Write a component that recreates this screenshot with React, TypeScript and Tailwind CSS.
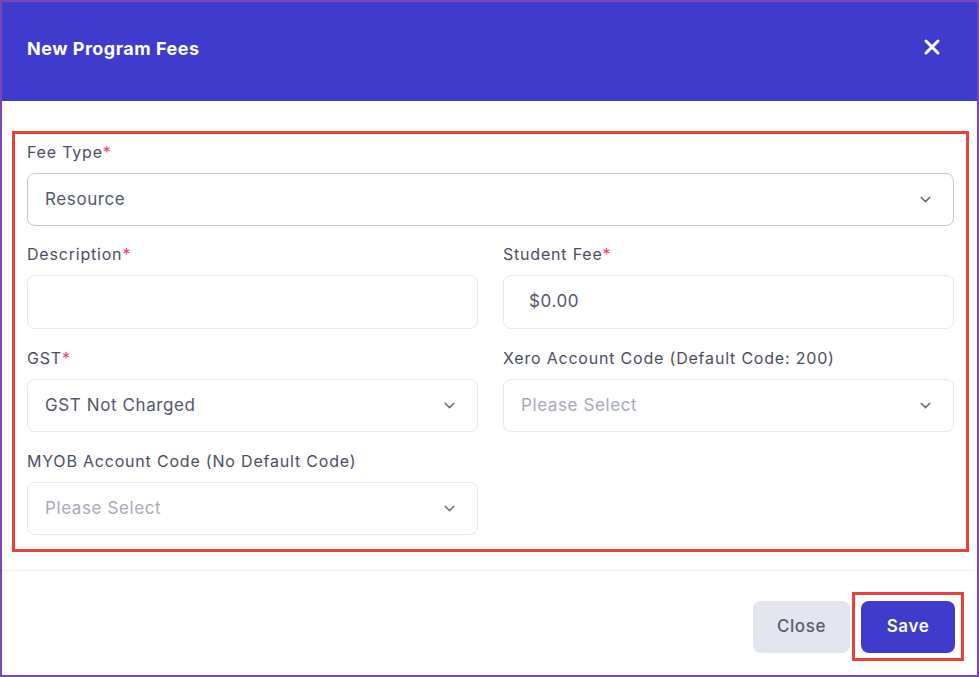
import { ChevronDown, X } from 'lucide-react'

const font = { fontFamily: 'Inter, "Open Sans", sans-serif' }

function Label({ text, required }: { text: string; required?: boolean }) {
  return (
    <label className="block h-[22px] text-[16px] leading-[22px] tracking-[0.8px] text-[#4b4e5f]">
      {text}
      {required && <span className="text-[#f0416c]">*</span>}
    </label>
  )
}

function SelectBox({ value, placeholder, dark }: { value?: string; placeholder?: string; dark?: boolean }) {
  return (
    <div
      className={
        'mt-[10px] flex h-[53px] items-center justify-between rounded-lg border bg-white pl-[17px] pr-[19px] ' +
        (dark ? 'border-[#c5c7d3]' : 'border-[#e6e7ef]')
      }
    >
      {value ? (
        <span className="text-[17px] tracking-[0.6px] text-[#535768]">{value}</span>
      ) : (
        <span className="text-[17px] tracking-[0.6px] text-[#a6aabb]">{placeholder}</span>
      )}
      <ChevronDown className="h-[17px] w-[17px] text-[#6b6f82]" strokeWidth={2} />
    </div>
  )
}

function TextBox({ value }: { value?: string }) {
  return (
    <div className="mt-[10px] flex h-[54px] items-center rounded-lg border border-[#e6e7ef] bg-white pl-[25px]">
      <span className="text-[17px] tracking-[0.6px] text-[#535768]">{value}</span>
    </div>
  )
}

export default function App() {
  return (
    <div style={font} className="flex h-[677px] w-[979px] flex-col border-2 border-[#7b44b8] bg-white">
      {/* Header */}
      <div className="flex h-[99px] items-center justify-between bg-[#3f3bcc] pl-[25px] pr-[33px]">
        <h1 className="mb-[6px] text-[18px] font-bold tracking-[0.5px] text-white">New Program Fees</h1>
        <X className="mb-[10px] h-[24px] w-[24px] text-white" strokeWidth={3} />
      </div>

      {/* Body */}
      <div className="ml-[10px] mr-[8px] mt-[30px] border-[3px] border-[#e8403a] px-[12px] pb-[14px] pt-[7px]">
        <Label text="Fee Type" required />
        <SelectBox value="Resource" dark />

        <div className="mt-[17px] grid grid-cols-2 gap-x-[25px]">
          <div>
            <Label text="Description" required />
            <TextBox />
          </div>
          <div>
            <Label text="Student Fee" required />
            <TextBox value="$0.00" />
          </div>
        </div>

        <div className="mt-[18px] grid grid-cols-2 gap-x-[25px]">
          <div>
            <Label text="GST" required />
            <SelectBox value="GST Not Charged" />
          </div>
          <div>
            <Label text="Xero Account Code (Default Code: 200)" />
            <SelectBox placeholder="Please Select" />
          </div>
        </div>

        <div className="mt-[18px] grid grid-cols-2 gap-x-[25px]">
          <div>
            <Label text="MYOB Account Code (No Default Code)" />
            <SelectBox placeholder="Please Select" />
          </div>
        </div>
      </div>

      {/* Footer */}
      <div className="mt-[18px] border-t border-[#eeeff3]" />
      <div className="flex justify-end pr-[13px] pt-[21px]">
        <button className="mt-[9px] h-[52px] w-[97px] rounded-lg bg-[#e4e6ef] text-[17px] font-medium tracking-[0.6px] text-[#5b5e6e]">
          Close
        </button>
        <div className="ml-[2px] border-[3px] border-[#e8403a] p-[6px] pb-[5px]">
          <button className="h-[52px] w-[94px] rounded-lg bg-[#3f3bcc] text-[17px] font-semibold tracking-[0.6px] text-white">
            Save
          </button>
        </div>
      </div>
    </div>
  )
}
